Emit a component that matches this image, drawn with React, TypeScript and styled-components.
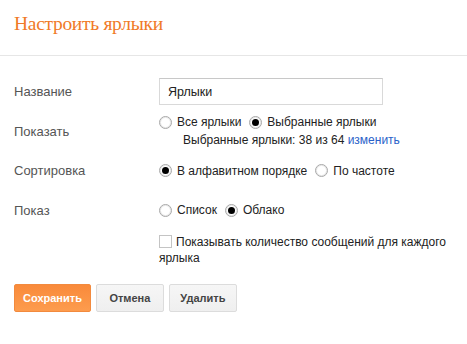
import React from 'react';
import styled, { createGlobalStyle } from 'styled-components';

const GlobalStyle = createGlobalStyle`
  html, body {
    margin: 0;
    padding: 0;
    background: #fff;
  }
  body {
    font-family: "Liberation Sans", Arial, sans-serif;
    font-size: 12px;
    color: #222;
  }
`;

const Page = styled.div`
  width: 467px;
  min-height: 344px;
  background: #fff;
`;

const Header = styled.div`
  height: 56px;
  box-sizing: border-box;
  padding: 14px 0 0 14px;
  border-bottom: 1px solid #e6e6e6;
`;

const Title = styled.h1`
  margin: 0;
  font-family: "Liberation Serif", "DejaVu Serif", serif;
  font-weight: normal;
  font-size: 19.5px;
  letter-spacing: -0.3px;
  line-height: 20px;
  color: #f07a28;
`;

const Form = styled.div`
  padding-top: 16px;
`;

const Row = styled.div`
  display: flex;
  align-items: center;
  min-height: 39.5px;
  padding-left: 14px;
`;

const Label = styled.div`
  width: 145px;
  flex-shrink: 0;
  color: #555;
  font-size: 13px;
`;

const Field = styled.div`
  display: flex;
  flex-direction: column;
`;

const TextInput = styled.input`
  box-sizing: border-box;
  width: 224px;
  height: 27px;
  padding: 0 8px;
  border: 1px solid #d9d9d9;
  border-top-color: #c8c8c8;
  font-family: "Liberation Sans", Arial, sans-serif;
  font-size: 12.5px;
  color: #222;
  outline: none;
`;

const Options = styled.div`
  display: flex;
  align-items: center;
  height: 18px;
`;

const Option = styled.label`
  display: inline-flex;
  align-items: center;
  gap: 5px;
  margin-right: 8px;
  color: #222;
`;

const RadioMark = styled.span<{ checked?: boolean }>`
  position: relative;
  box-sizing: border-box;
  width: 13px;
  height: 13px;
  border-radius: 50%;
  border: 1px solid #a8a8a8;
  background: #fff;
  box-shadow: inset 0 0 0 1px #e8e8e8;

  &::after {
    content: '';
    display: ${(p) => (p.checked ? 'block' : 'none')};
    position: absolute;
    left: 2px;
    top: 2px;
    width: 7px;
    height: 7px;
    border-radius: 50%;
    background: #000;
  }
`;

const Note = styled.div`
  height: 18px;
  line-height: 18px;
  padding-left: 24px;
  color: #222;
`;

const Link = styled.a`
  color: #2a62c9;
  text-decoration: none;
`;

const CheckRow = styled.div`
  padding: 4px 8px 0 159px;
  line-height: 16px;
  color: #222;
`;

const CheckBox = styled.span`
  display: inline-block;
  box-sizing: border-box;
  width: 13px;
  height: 13px;
  margin: 0 4px 0 0;
  vertical-align: -2px;
  border: 1px solid #c4c4c4;
  background: #fff;
`;

const Actions = styled.div`
  display: flex;
  gap: 5px;
  padding-left: 14px;
  margin-top: 18px;
`;

const Button = styled.button<{ primary?: boolean }>`
  box-sizing: border-box;
  min-width: 68px;
  height: 28px;
  padding: 0 8px;
  font-family: "Liberation Sans", Arial, sans-serif;
  font-size: 11px;
  font-weight: bold;
  border-radius: 2px;
  border: 1px solid ${(p) => (p.primary ? '#f28a3e' : '#dcdcdc')};
  background: ${(p) =>
    p.primary
      ? 'linear-gradient(#f98a3a, #fd9c4e)'
      : 'linear-gradient(#f6f6f6, #efefef)'};
  color: ${(p) => (p.primary ? '#fff' : '#444')};
  cursor: pointer;
`;

const Radio = ({ checked, children }: { checked?: boolean; children: React.ReactNode }) => (
  <Option>
    <RadioMark checked={checked} />
    {children}
  </Option>
);

export default function App() {
  return (
    <Page>
      <GlobalStyle />
      <Header>
        <Title>Настроить ярлыки</Title>
      </Header>
      <Form>
        <Row>
          <Label>Название</Label>
          <Field>
            <TextInput defaultValue="Ярлыки" />
          </Field>
        </Row>
        <Row>
          <Label>Показать</Label>
          <Field>
            <Options>
              <Radio>Все ярлыки</Radio>
              <Radio checked>Выбранные ярлыки</Radio>
            </Options>
            <Note>
              Выбранные ярлыки: 38 из 64 <Link href="#">изменить</Link>
            </Note>
          </Field>
        </Row>
        <Row>
          <Label>Сортировка</Label>
          <Options>
            <Radio checked>В алфавитном порядке</Radio>
            <Radio>По частоте</Radio>
          </Options>
        </Row>
        <Row>
          <Label>Показ</Label>
          <Options>
            <Radio>Список</Radio>
            <Radio checked>Облако</Radio>
          </Options>
        </Row>
        <CheckRow>
          <CheckBox />
          Показывать количество сообщений для каждого ярлыка
        </CheckRow>
        <Actions>
          <Button primary>Сохранить</Button>
          <Button>Отмена</Button>
          <Button>Удалить</Button>
        </Actions>
      </Form>
    </Page>
  );
}
